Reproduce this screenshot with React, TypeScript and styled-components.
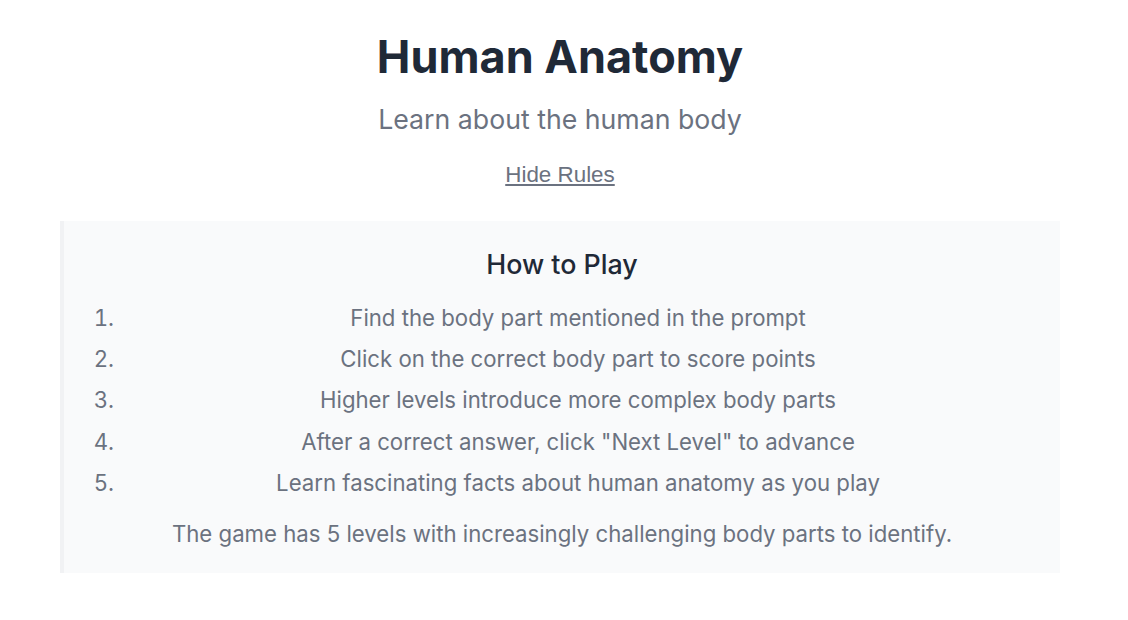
import React from "react";
import styled, { createGlobalStyle } from "styled-components";

const GlobalStyle = createGlobalStyle`
  html, body {
    margin: 0;
    padding: 0;
    background: #ffffff;
  }
  body {
    font-family: Inter, "Noto Sans", sans-serif;
  }
`;

const Page = styled.div`
  padding: 29px 8px 40px 0;
`;

const Container = styled.main`
  max-width: 1000px;
  margin: 0 auto;
  display: flex;
  flex-direction: column;
  align-items: center;
`;

const Title = styled.h1`
  margin: 0;
  font-size: 45px;
  font-weight: 700;
  color: #1f2937;
`;

const Subtitle = styled.p`
  margin: 19px 0 0;
  font-size: 26.7px;
  font-weight: 400;
  color: #6b7280;
`;

const LinkButton = styled.button`
  margin-top: 27px;
  background: none;
  border: none;
  padding: 0;
  font-family: "Liberation Sans", Arial, sans-serif;
  font-size: 22.4px;
  color: #6b7280;
  text-decoration: underline;
  cursor: pointer;
`;

const Panel = styled.section`
  align-self: stretch;
  margin-top: 33px;
  background: #f9fafb;
  border-left: 4px solid #f1f2f4;
  padding: 27px 27px 26px;
  text-align: center;
`;

const PanelTitle = styled.h2`
  margin: 0 0 21px;
  font-size: 26.8px;
  font-weight: 500;
  color: #1f2937;
`;

const Steps = styled.ol`
  margin: 0;
  padding-left: 29px;
`;

const Step = styled.li`
  padding-left: 3px;
  font-size: 22.2px;
  line-height: 33.3px;
  color: #6b7280;
  margin-bottom: 7.9px;
  text-align: center;
`;

const Note = styled.p`
  margin: 21px 0 0;
  font-size: 22.2px;
  color: #6b7280;
`;

const steps = [
  "Find the body part mentioned in the prompt",
  "Click on the correct body part to score points",
  "Higher levels introduce more complex body parts",
  'After a correct answer, click "Next Level" to advance',
  "Learn fascinating facts about human anatomy as you play",
];

export default function App() {
  return (
    <>
      <GlobalStyle />
      <Page>
        <Container>
          <Title>Human Anatomy</Title>
          <Subtitle>Learn about the human body</Subtitle>
          <LinkButton type="button">Hide Rules</LinkButton>
          <Panel>
            <PanelTitle>How to Play</PanelTitle>
            <Steps>
              {steps.map((s) => (
                <Step key={s}>{s}</Step>
              ))}
            </Steps>
            <Note>
              The game has 5 levels with increasingly challenging body parts to identify.
            </Note>
          </Panel>
        </Container>
      </Page>
    </>
  );
}
